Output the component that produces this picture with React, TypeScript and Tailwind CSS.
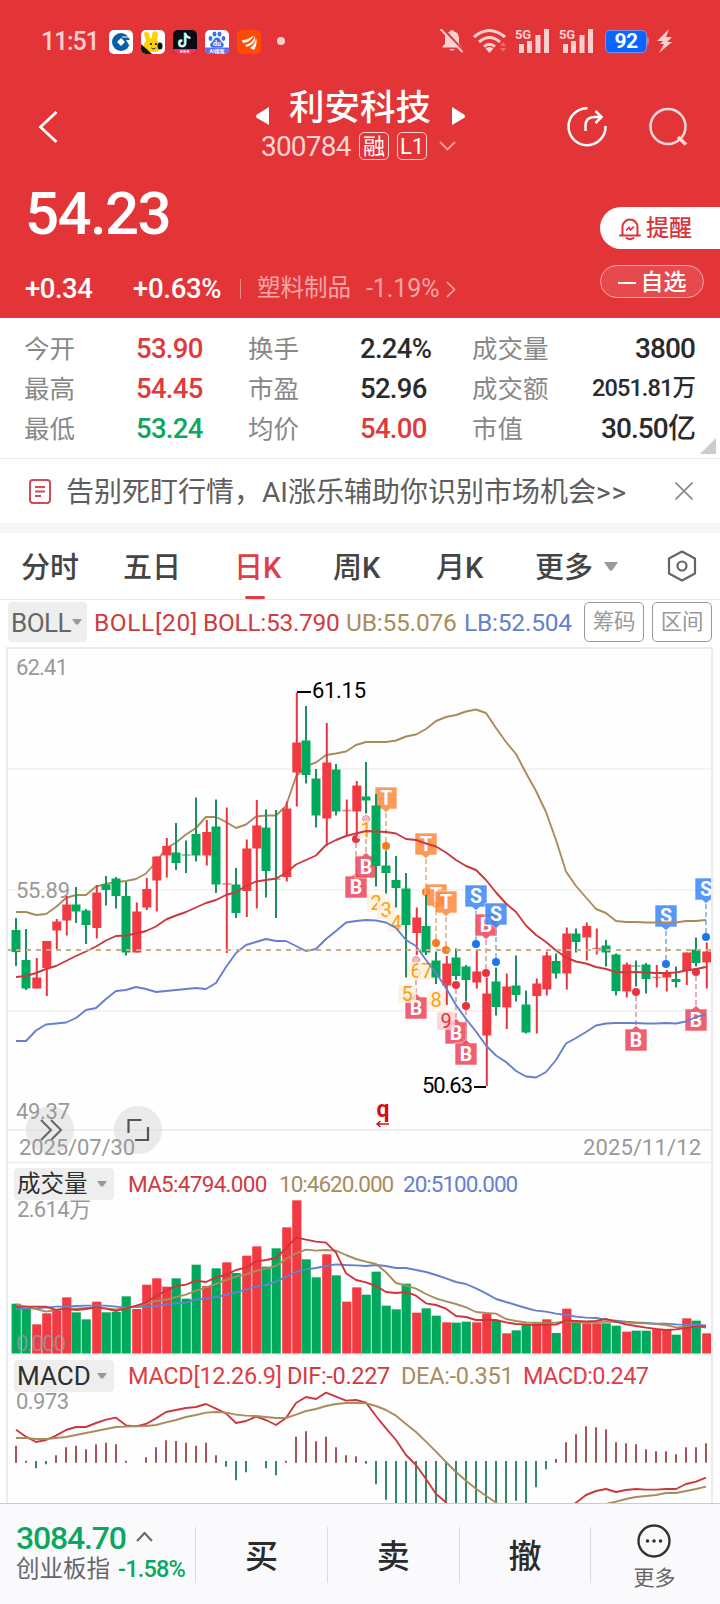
import { ReactNode } from "react";

const RED = "#f23a43";
const GREEN = "#00a95c";
const FONT = { fontFamily: '"Roboto","Noto Sans CJK SC",sans-serif' };

// high, body top, body bottom, low, "r" rising or "g" falling
type Candle = [number, number, number, number, string];

const candles: Candle[] = [
    [918, 930, 952, 966, "g"], [929, 960, 988.5, 990, "g"], [958, 977.5, 988.5, 988.5, "r"], [941, 941, 968, 996, "r"],
    [919, 921.5, 930.5, 949, "r"], [896, 904.5, 920.5, 935.5, "r"], [887, 904.5, 911.5, 923, "g"], [909, 910.5, 925, 944, "g"],
    [885, 892.5, 928, 938.5, "r"], [876, 884.5, 890, 905.5, "g"], [877, 878.5, 896, 908.5, "g"], [882, 896, 952.5, 955.5, "g"],
    [902.5, 911.5, 952.5, 952.5, "r"], [878, 889, 907.5, 910, "r"], [856.5, 856.5, 880.5, 911.5, "r"], [838, 846, 855.5, 877.5, "r"],
    [823, 852.5, 863, 870, "g"], [840.5, 855, 855, 873, "g"], [797.5, 834, 855.5, 861.5, "g"], [820, 832, 855.5, 865.5, "r"],
    [799.5, 826.5, 884.5, 893, "g"], [807.5, 884, 884, 953, "r"], [868, 884.5, 913, 918, "g"], [839.5, 848.5, 891, 917, "r"],
    [800, 825.5, 848.5, 908.5, "r"], [809.5, 827.5, 871, 897.5, "g"], [810, 879, 879, 918, "g"], [801.5, 808.5, 877, 881.5, "r"],
    [692.5, 742.5, 772.5, 806.5, "r"], [706, 740.5, 775, 783.5, "g"], [769, 778.5, 815.5, 827.5, "g"], [723, 762.5, 818.5, 846, "r"],
    [764, 769.5, 811.5, 815.5, "g"], [799.5, 810.5, 810.5, 836, "r"], [781, 785.5, 811.5, 836, "r"], [762, 796.5, 800.5, 813.5, "g"],
    [794, 805.5, 866, 886.5, "g"], [850.5, 865.5, 873, 893.5, "g"], [856, 880, 888, 907.5, "g"], [873, 888.5, 925, 977.5, "g"],
    [907.5, 917.5, 933, 955, "r"], [895, 926, 952.5, 955, "g"], [951.5, 960.5, 977.5, 984, "g"], [956, 963.5, 985.5, 1005, "r"],
    [948.5, 957.5, 976, 980, "g"], [965, 966.5, 980, 1001.5, "g"], [950.5, 971.5, 982.5, 988.5, "r"], [977.5, 993.5, 1035.5, 1086, "r"],
    [967.5, 981.5, 1007, 1015.5, "g"], [973.5, 986.5, 1007.5, 1029, "r"], [955.5, 985.5, 995, 1001.5, "g"], [990.5, 1004.5, 1032.5, 1033.5, "g"],
    [978.5, 983.5, 996, 1033.5, "r"], [951.5, 955.5, 989.5, 995.5, "r"], [953.5, 961, 973.5, 978.5, "g"], [927.5, 933.5, 973.5, 989.5, "r"],
    [928.5, 933.5, 942, 952.5, "g"], [922.5, 926, 937.5, 960.5, "r"], [928.5, 948.5, 948.5, 954.5, "r"], [940, 945.5, 952.5, 966.5, "g"],
    [953.5, 954.5, 991, 995.5, "g"], [962.5, 964.5, 991.5, 997.5, "r"], [960.5, 966, 966, 986.5, "g"], [963, 964.5, 979, 993.5, "g"],
    [965, 977.5, 977.5, 987.5, "r"], [970, 972.5, 977.5, 991.5, "r"], [966.5, 979, 982, 987.5, "g"], [952.5, 952.5, 971, 985, "r"],
    [937.5, 949.5, 963, 966.5, "g"], [942.5, 951.5, 962.5, 988.5, "r"],
];

const upper = [912, 912, 915, 914, 907, 898, 895, 895, 886.5, 884, 882, 881, 879, 873.5, 862, 848.5, 842.5, 834.5, 828, 817, 817, 822, 828, 824.5, 816.5, 815.5, 815.5, 806, 776.5, 766, 762.5, 755, 753.5, 751.5, 745, 742, 742, 742, 740.5, 736.5, 734.5, 729, 721, 717, 715, 711.5, 709.5, 713, 728, 742, 754, 773, 791, 812, 840, 871.5, 886, 897.5, 909, 913, 921, 922, 922, 922.5, 922.5, 922.5, 922.5, 921, 921, 920];
const middle = [977, 976, 973, 969, 966, 961, 956, 951.5, 946.5, 940.5, 936, 935.5, 933.5, 931, 926.5, 919.5, 915.5, 912, 907.5, 903, 900, 895, 892, 886, 881.5, 880, 878.5, 873, 864.5, 860, 855.5, 845, 840, 836, 833.5, 831, 831.5, 832, 833.5, 839, 840, 843.5, 846.5, 852.5, 860, 866, 870, 880, 892.5, 903.5, 912, 925.5, 935, 942, 950.5, 957.5, 961.5, 963.5, 967, 969, 972, 972.5, 972, 972.5, 973, 973, 972.5, 970.5, 969, 967];
const lower = [1041, 1041, 1030.5, 1024.5, 1023.5, 1022.5, 1018, 1010, 1008, 999, 991, 990, 987, 989, 992, 991, 990, 989, 988, 989, 983, 967, 953, 945, 942, 939, 941, 941, 946, 951, 949, 939, 931, 922.5, 921, 920, 920.5, 922.5, 928, 940, 946, 960, 973, 988, 1005, 1019, 1031.5, 1045.5, 1055.5, 1062, 1071, 1076.5, 1077.5, 1072, 1060, 1043.5, 1038, 1032, 1025.5, 1023.5, 1023, 1023, 1023, 1023.5, 1023.5, 1023, 1023.5, 1021.5, 1017, 1014.5];

// volume panel, in thirds of a pixel below the panel origin
const volume = [431, 447, 493, 460, 452, 412, 457, 478, 425, 457, 456, 409, 447, 374, 355, 380, 355, 416, 314, 378, 325, 307, 339, 287, 259, 320, 265, 202, 121, 298, 352, 283, 346, 425, 382, 404, 335, 437, 448, 371, 458, 445, 467, 487, 488, 485, 487, 462, 482, 520, 511, 493, 490, 478, 519, 446, 487, 490, 490, 490, 497, 515, 512, 512, 508, 509, 524, 475, 482, 520];
const ma5 = [442, 440, 440, 440, 450, 446, 450, 447, 442, 446, 453, 445, 437, 428, 408, 392, 378, 374, 362, 366, 352, 345, 330, 323, 304, 300, 294, 265, 232, 239, 245, 248, 278, 340, 360, 367, 378, 396, 399, 396, 407, 430, 435, 446, 468, 471, 480, 480, 480, 487, 492, 493, 495, 494, 494, 482, 483, 484, 483, 477, 485, 493, 498, 503, 507, 510, 508, 504, 500, 500];
const ma10 = [433, 440, 447, 455, 450, 446, 446, 444, 443, 445, 448, 443, 440, 430, 423, 420, 411, 404, 392, 382, 372, 360, 350, 343, 333, 326, 318, 297, 280, 269, 272, 270, 272, 285, 297, 305, 312, 337, 369, 377, 386, 402, 415, 424, 432, 442, 456, 459, 461, 477, 483, 487, 488, 489, 488, 484, 487, 488, 488, 485, 486, 488, 489, 490, 492, 495, 502, 500, 499, 503];
const ma20 = [447, 446, 445, 443, 440, 440, 438, 437, 437, 437, 440, 443, 441, 440, 438, 433, 430, 428, 418, 416, 411, 405, 397, 388, 379, 375, 365, 350, 336, 328, 324, 318, 313, 315, 316, 318, 315, 318, 324, 324, 330, 336, 345, 355, 366, 372, 385, 400, 417, 426, 435, 444, 452, 455, 461, 465, 470, 473, 474, 479, 482, 485, 487, 489, 491, 491, 493, 494, 494, 496];

// MACD histogram: positive rises above the zero line
const hist = [51, 6, -22, -10, 22, 46, 51, 40, 55, 60, 55, 6, 0, 16, 46, 67, 65, 60, 51, 60, 22, -17, -58, -34, 0, -22, -43, 6, 78, 94, 64, 78, 46, 22, 19, -8, -70, -116, -150, -180, -200, -220, -220, -220, -210, -200, -190, -180, -160, -140, -119, -126, -79, -25, 11, 61, 85, 109, 106, 100, 61, 58, 55, 40, 34, 34, 25, 46, 46, 58];
const dif = [239, 260, 276, 270, 257, 240, 231, 231, 219, 209, 203, 226, 229, 222, 205, 186, 180, 174, 171, 162, 176, 190, 219, 213, 200, 210, 225, 204, 159, 141, 147, 128, 140, 152, 150, 158, 198, 235, 270, 315, 345, 387, 432, 457, 500, 540, 560, 580, 590, 590, 580, 570, 550, 530, 510, 485, 458, 435, 423, 417, 426, 420, 417, 419, 419, 417, 417, 402, 395, 383];
const dea = [264, 264, 267, 267, 264, 261, 255, 249, 243, 237, 231, 230, 229, 228, 225, 217, 210, 201, 195, 188, 186, 188, 194, 197, 198, 201, 204, 204, 194, 183, 177, 168, 162, 159, 159, 160, 168, 180, 197, 222, 246, 275, 305, 336, 366, 392, 416, 437, 458, 478, 495, 510, 515, 515, 510, 505, 500, 490, 475, 462, 455, 447, 441, 438, 435, 429, 429, 423, 417, 410];

const xAt = (i: number) => 16 + i * 10;
const line = (ys: number[]) => ys.map((y, i) => `${xAt(i)},${y}`).join(" ");
const scaled = (ys: number[], top: number) => ys.map((y) => top + y / 3);

const Line = ({ ys, color }: { ys: number[]; color: string }) => (
    <polyline points={line(ys)} fill="none" stroke={color} strokeWidth="1.9" strokeLinejoin="round" />
);

type MarkerProps = { x: number; y: number; kind: "B" | "S" | "T"; dot: number; down?: boolean; faded?: boolean };

const markerFill = { B: "#ee4457", S: "#3a85f7", T: "#fb8a3a" };
const dotFill = { B: "#e8323f", S: "#1f74f0", T: "#fb7b1c" };
const dashStroke = { B: "#dc9aa4", S: "#86aedd", T: "#dfae84" };

const Marker = ({ x, y, kind, dot, down, faded }: MarkerProps) => (
    <g>
        <line x1={x} x2={x} y1={down ? y + 15 : y - 15} y2={dot} stroke={dashStroke[kind]} strokeWidth="1.6" strokeDasharray="5 3" />
        {faded
            ? <circle cx={x} cy={dot} r="3.5" fill="#f6b9bf" stroke="#e2606b" strokeDasharray="1.5 1" />
            : <circle cx={x} cy={dot} r="4" fill={dotFill[kind]} />}
        <path
            d={down
                ? `M${x - 11} ${y - 11}h22v22h-7l-4 3.500l-4 -3.500h-7z`
                : `M${x - 11} ${y + 11}h22v-22h-7l-4 -3.500l-4 3.500h-7z`}
            fill={markerFill[kind]}
            fillOpacity="0.85"
            stroke="#fff"
            strokeWidth="0.6"
        />
        <text x={x} y={y + 7} textAnchor="middle" fontSize="19.5" fontWeight="700" fill="#fff">{kind}</text>
    </g>
);

const markers: MarkerProps[] = [
    { x: 356, y: 887, kind: "B", dot: 839 },
    { x: 366, y: 867, kind: "B", dot: 819, faded: true },
    { x: 386, y: 798, kind: "T", dot: 846, down: true },
    { x: 426, y: 844, kind: "T", dot: 892, down: true },
    { x: 436, y: 895, kind: "T", dot: 943, down: true },
    { x: 446, y: 902, kind: "T", dot: 950, down: true },
    { x: 416, y: 1008, kind: "B", dot: 960, faded: true },
    { x: 456, y: 1033, kind: "B", dot: 985 },
    { x: 466, y: 1054, kind: "B", dot: 1006 },
    { x: 476, y: 896, kind: "S", dot: 944, down: true },
    { x: 486, y: 925, kind: "B", dot: 973, down: true },
    { x: 496, y: 914, kind: "S", dot: 962, down: true },
    { x: 636, y: 1040, kind: "B", dot: 992 },
    { x: 666, y: 916, kind: "S", dot: 964, down: true },
    { x: 696, y: 1020, kind: "B", dot: 972 },
    { x: 706, y: 889, kind: "S", dot: 937, down: true },
];

const counts = [
    { n: 1, x: 366, y: 830 }, { n: 2, x: 376, y: 903 }, { n: 3, x: 386, y: 910 }, { n: 4, x: 396, y: 923 },
    { n: 5, x: 407, y: 994 }, { n: 6, x: 416, y: 971 }, { n: 7, x: 427, y: 971 }, { n: 8, x: 436, y: 1000 }, { n: 9, x: 446, y: 1021 },
];

const PriceChart = () => (
    <svg className="block" width="703" height="514" viewBox="8 649 703 514" style={{ overflow: "visible" }}>
        <clipPath id="plot"><rect x="0" y="649" width="713" height="514" /></clipPath>
        {[769, 890, 1011].map((y) => <line key={y} x1="8" x2="711" y1={y} y2={y} stroke="#f3f3f3" strokeWidth="2" />)}
        <line x1="8" x2="711" y1="1130" y2="1130" stroke="#ededed" strokeWidth="2" />
        <line x1="8" x2="711" y1="1162.500" y2="1162.500" stroke="#f0f0f0" strokeWidth="1.5" />
        <g fill="#999" fontSize="22">
            <text x="16" y="675" textLength="52">62.41</text>
            <text x="16" y="898" textLength="54">55.89</text>
        </g>
        <g clipPath="url(#plot)">
            {markers.map((m) => <Marker key={`${m.x}-${m.y}`} {...m} />)}
            {counts.map(({ n, x, y }) => (
                <g key={n}>
                    <rect x={x - 9} y={y - 9} width="18" height="18" rx="2" fill={n === 9 ? "#fbcdd3" : "#fdf0dc"} fillOpacity="0.8" />
                    <text x={x} y={y + 7} textAnchor="middle" fontSize="20" fill={n === 9 ? "#e8323f" : "#f5a11c"}>{n}</text>
                </g>
            ))}
        </g>
        <Line ys={upper} color="#a98c5b" />
        {candles.map(([hi, top, bottom, lo, dir], i) => {
            const x = xAt(i) + (dir === "r" ? 0.8 : 0);
            const wick = dir === "r" ? "#e8353f" : "#1f8f5f";
            return (
                <g key={i}>
                    <line x1={x} x2={x} y1={hi} y2={lo} stroke={wick} strokeWidth="2" />
                    {top === bottom
                        ? <line x1={x - 4.5} x2={x + 4.5} y1={top} y2={top} stroke={wick} strokeOpacity="0.6" strokeWidth="1.6" />
                        : <rect x={x - 4.5} y={top} width="9" height={bottom - top} fill={dir === "r" ? RED : GREEN} />}
                </g>
            );
        })}
        <Line ys={middle} color="#c93a3f" />
        <Line ys={lower} color="#6480cf" />
        <line x1="6" x2="711" y1="950" y2="950" stroke="#c8b083" strokeWidth="1.8" strokeDasharray="5 5" />
        <path d="M297 692h14M474 1087h12" stroke="#000" strokeWidth="2" />
        <g fill="#000" fontSize="22">
            <text x="312" y="698" textLength="54">61.15</text>
            <text x="422" y="1092.500" textLength="51">50.63</text>
        </g>
        <text x="383" y="1117" textAnchor="middle" fontSize="23" fontWeight="700" fill="#d40f0f">q</text>
        <path d="M389 1124h-12m3.500 -3l-3.500 3l3.500 3" fill="none" stroke="#d40f0f" strokeWidth="1.400" />
        <g fill="#dedede" fillOpacity="0.65">
            <circle cx="50" cy="1130" r="24" />
            <circle cx="138" cy="1130" r="24" />
        </g>
        <path d="M41 1120l10 10l-10 10M51 1120l10 10l-10 10" fill="none" stroke="#666" strokeWidth="2" />
        <path d="M128.500 1133v-13h13M148 1127v13h-13" fill="none" stroke="#555" strokeWidth="2.200" />
        <g fill="#999" fontSize="22">
            <text x="16" y="1119" textLength="54">49.37</text>
            <text x="19" y="1155" textLength="116">2025/07/30</text>
            <text x="583" y="1155" textLength="118">2025/11/12</text>
        </g>
    </svg>
);

const VolumeChart = () => (
    <svg className="block" width="703" height="155" viewBox="8 1200 703 155" style={{ overflow: "visible" }}>
        {volume.map((v, i) => {
            const rising = candles[i][4] === "r";
            const y = 1160 + v / 3;
            return <rect key={i} x={xAt(i) - (rising ? 3.8 : 4.4)} y={y} width="9.2" height={1353.5 - y} fill={rising ? RED : GREEN} />;
        })}
        <Line ys={scaled(ma20, 1160)} color="#6480cf" />
        <Line ys={scaled(ma10, 1160)} color="#a98c5b" />
        <Line ys={scaled(ma5, 1160)} color="#d23338" />
        <text x="17" y="1217" fontSize="22" fill="#999" textLength="74">2.614万</text>
        <text x="16" y="1351" fontSize="22" fill="#999" fillOpacity="0.8" textLength="50">0.000</text>
        <line x1="8" x2="711" y1="1354.500" y2="1354.500" stroke="#efefef" />
    </svg>
);

const MacdChart = () => (
    <svg className="block" width="703" height="111" viewBox="8 1392 703 111" style={{ overflow: "visible" }}>
        {hist.map((h, i) => h !== 0 && (
            <line
                key={i}
                x1={xAt(i)}
                x2={xAt(i)}
                y1={h > 0 ? 1462.7 : 1461}
                y2={h > 0 ? 1462.7 - h / 3 : 1461 - h / 3}
                stroke={h > 0 ? "#a9545a" : "#318a66"}
                strokeWidth="2"
            />
        ))}
        <Line ys={scaled(dif, 1350)} color="#c93a3f" />
        <Line ys={scaled(dea, 1350)} color="#a98c5b" />
        <text x="16" y="1409" fontSize="22" fill="#999" textLength="53">0.973</text>
    </svg>
);

const StatusBar = () => (
    <div className="flex h-[82px] items-center pl-[41px]">
        <span className="w-[68px] pt-0.5 text-[25px] font-medium tracking-[-1.2px] text-[#fbd0d0]">11:51</span>
        <div className="flex gap-2 pt-0.5">
            <svg width="24" height="24" viewBox="0 0 24 24">
                <rect width="24" height="24" rx="5" fill="#fff" />
                <circle cx="12" cy="12" r="9" fill="#0a5ea8" />
                <path d="M12 8l4 4l-4 4l-4 -4z" fill="#fff" />
                <path d="M13 7h7l-2 -4" fill="none" stroke="#fff" strokeWidth="1.200" />
                <path d="M17 10h6v5h-3z" fill="#fff" />
            </svg>
            <svg width="24" height="24" viewBox="0 0 24 24">
                <rect width="24" height="24" rx="5" fill="#fff" />
                <path d="M3 4c0 -3 4 -3 5 0l1 4h2l0 -4c1 -4 6 -3 6 0l-1 6c3 4 5 12 -2 12h-8c-5 -3 -4 -8 -1 -11z" fill="#fdd20c" />
                <path d="M0 14l11 10h-6a5 5 0 0 1 -5 -5z" fill="#111" />
                <ellipse cx="19" cy="16" rx="2.500" ry="3.500" fill="#111" />
                <circle cx="10" cy="14" r="1" /><circle cx="15" cy="14" r="1" />
                <path d="M10.500 18q2 2 4 0" fill="none" stroke="#111" strokeWidth="0.900" />
            </svg>
            <svg width="24" height="24" viewBox="0 0 24 24">
                <rect width="24" height="24" rx="5" fill="#0b0b14" />
                <path d="M12.500 3v10.500a3 3 0 1 1 -3 -3M12.500 4q1 3.500 5 4" fill="none" stroke="#29e5e5" strokeWidth="2.200" transform="translate(-.7 -.5)" />
                <path d="M12.500 3v10.500a3 3 0 1 1 -3 -3M12.500 4q1 3.500 5 4" fill="none" stroke="#fff" strokeWidth="1.900" />
                <path d="M0 19h24a5 5 0 0 1 -5 5h-14a5 5 0 0 1 -5 -5z" fill="#f0356d" />
                <path d="M7 21.500h10" stroke="#fff" strokeWidth="1.800" strokeDasharray="2.500 .8" />
            </svg>
            <svg width="24" height="24" viewBox="0 0 24 24">
                <rect width="24" height="24" rx="5" fill="#fff" />
                <g fill="#3a70e8">
                    <ellipse cx="9.500" cy="4" rx="2" ry="2.600" /><ellipse cx="14.500" cy="4" rx="2" ry="2.600" />
                    <ellipse cx="5.500" cy="8.500" rx="1.900" ry="2.400" /><ellipse cx="18.500" cy="8.500" rx="1.900" ry="2.400" />
                    <path d="M12 7.500c3 0 3 3 5.500 5s1 5 -1.500 5h-8c-2.500 0 -4 -3 -1.500 -5s2.500 -5 5.500 -5z" />
                </g>
                <text x="12" y="16" fontSize="7" fontWeight="700" fill="#fff" textAnchor="middle">du</text>
                <path d="M0 17.500h24v1.500a5 5 0 0 1 -5 5h-14a5 5 0 0 1 -5 -5z" fill="#5b6ff0" />
                <text x="12" y="23" fontSize="5" fontWeight="700" fill="#fff" textAnchor="middle">AI搜索</text>
            </svg>
            <svg width="24" height="24" viewBox="0 0 24 24">
                <rect width="24" height="24" rx="5" fill="#ff4a00" />
                <path d="M5 10q7 0 12 -5q-3 7 -11 8zM8 15q8 -2 10 -9q1 8 -8 11zM13 18q5 -3 6 -10q2 6 -2 12z" fill="#fff" />
            </svg>
        </div>
        <span className="ml-4 size-2 rounded-full bg-[#fbd0d0]" />
        <svg className="ml-[155px]" width="24" height="24" viewBox="0 0 24 24">
            <path d="M12 1a2 2 0 0 1 2 1.500c4 1 5 4 5 7v5l3 4h-20l3 -4v-5c0 -3 1 -6 5 -7a2 2 0 0 1 2 -1.500zM9 20h6q-3 3.500 -6 0z" fill="#fbd0d0" />
            <path d="M2 -1L24 23" stroke="#e33538" strokeWidth="3" />
            <path d="M0.500 0L22.500 23" stroke="#fbd0d0" strokeWidth="2" />
        </svg>
        <svg className="ml-2" width="36" height="26" viewBox="0 0 36 26">
            <path d="M2 9q15 -13 31 0M7 14q10.500 -9 21 0M12 18.500q5.500 -4.500 11 0" fill="none" stroke="#fbd0d0" strokeWidth="3" />
            <path d="M13.500 20.500q4 -3 8 0l-4 4.500z" fill="#fbd0d0" />
            <path d="M28 18l3 -4l3 4zM28 20l3 4l3 -4z" fill="#ee6b6b" />
        </svg>
        {[0, 1].map((n) => (
            <svg key={n} className="ml-[7px]" width="37" height="26" viewBox="0 0 37 26">
                <text x="0" y="10.500" fontSize="13" fontWeight="700" fill="#fbd0d0" textLength="16">5G</text>
                <path d="M4 16h5v9h-5zM12 13h5v12h-5zM20.500 7h5v18h-5zM29 1h5v24h-5z" fill="#fbd0d0" />
            </svg>
        ))}
        <span className="ml-[9px] flex h-[23px] w-[42px] items-center justify-center rounded-[5px] border border-[#7c8fe8] bg-[#0766ff] pt-0.5 text-[21px] font-bold tracking-[-0.5px] text-white">92</span>
        <span className="h-2 w-0.5 rounded-r bg-[#ee6b6b]" />
        <svg className="ml-[7px]" width="17" height="24" viewBox="0 0 17 24">
            <path d="M13 0L1 12h6l-3 3h4l-5 9L16 13h-5l5 -5h-6z" fill="#fbd0d0" />
        </svg>
    </div>
);

const Header = () => (
    <header className="h-[318px] w-full bg-[#e33538] text-white">
        <StatusBar />
        <div className="flex h-[88px] items-start pl-[38px]">
            <svg className="mt-[28px]" width="20" height="34" viewBox="0 0 20 34">
                <path d="M18.500 2L2.500 17l16 15" fill="none" stroke="#fff" strokeWidth="2.800" />
            </svg>
            <div className="ml-[184px] flex w-[240px] flex-col items-center">
                <div className="flex h-12 w-full items-center pt-1 pl-[14px]">
                    <svg className="mt-4" width="13" height="18" viewBox="0 0 13 18"><path d="M13 0v18l-12 -7q-2 -2 0 -3.500z" fill="#fff" /></svg>
                    <h1 className="ml-[20px] text-[35.500px] leading-[48px] font-medium whitespace-nowrap">利安科技</h1>
                    <svg className="mt-4 ml-[21px]" width="13" height="18" viewBox="0 0 13 18"><path d="M0 0v18l12 -7q2 -2 0 -3.500z" fill="#fff" /></svg>
                </div>
                <div className="flex h-8 w-full items-center pl-[19px]">
                    <span className="w-[98px] pt-0.5 text-[28px] tracking-[-0.8px] text-[#fbd3d3]">300784</span>
                    <span className="flex h-7 w-[30px] items-center justify-center rounded-[5px] border border-[#fbd3d3] text-[22px]">融</span>
                    <span className="ml-2 flex h-7 w-[30px] items-center justify-center rounded-[5px] border border-[#fbd3d3] text-[22px]">L1</span>
                    <svg className="ml-3" width="17" height="10" viewBox="0 0 17 10"><path d="M1 1l7.500 7.500L16 1" fill="none" stroke="#f3a3a3" strokeWidth="1.800" /></svg>
                </div>
            </div>
            <svg className="mt-[24px] ml-[84px]" width="42" height="42" viewBox="0 0 42 42">
                <path d="M21.500 2.200A18.500 18.500 0 1 0 39.500 20" fill="none" stroke="#fff" strokeWidth="2.500" />
                <path d="M19.500 25v-5q0 -9 9 -9h7M29.500 5l6 6l-6 6" fill="none" stroke="#fff" strokeWidth="2.500" />
            </svg>
            <svg className="mt-[25px] ml-[40px]" width="42" height="42" viewBox="0 0 42 42">
                <circle cx="20" cy="19.500" r="17.500" fill="none" stroke="#f9dada" strokeWidth="2.500" />
                <path d="M30 30l8 7.500" stroke="#f9dada" strokeWidth="3.500" />
            </svg>
        </div>
        <div className="flex h-[148px] justify-between">
            <div className="pl-[25px]">
                <div className="mt-[13px] text-[60px] leading-[62px] font-medium tracking-[-1.6px]">54.23</div>
                <div className="mt-[29px] flex h-[30px] items-center">
                    <span className="w-[108px] text-[27.5px] font-medium tracking-[-0.5px]">+0.34</span>
                    <span className="w-[107px] text-[27.5px] font-medium tracking-[-0.3px]">+0.63%</span>
                    <span className="h-5 w-px bg-[#f08a8a]" />
                    <span className="ml-4 w-[109px] text-[23.5px] whitespace-nowrap text-[#f6a5a6]">塑料制品</span>
                    <span className="w-[80px] text-[25px] tracking-[-0.1px] text-[#f6a5a6]">-1.19%</span>
                    <svg width="10" height="17" viewBox="0 0 10 17"><path d="M1 1l7.500 7.500L1 16" fill="none" stroke="#f6a5a6" strokeWidth="1.600" /></svg>
                </div>
            </div>
            <div className="flex w-[120px] flex-col pt-[37px]">
                <div className="flex h-[42px] items-center rounded-l-full bg-white pl-[19px] text-[23px] text-[#d8343a]">
                    <svg className="mt-0.5 mr-[5px]" width="22" height="24" viewBox="0 0 22 24">
                        <path d="M3.500 18v-8a7.500 7.500 0 0 1 15 0v8M1 18.500h20M7.500 21q3.500 2.500 7 0" fill="none" stroke="#d8343a" strokeWidth="2" strokeLinecap="round" />
                        <path d="M7 13.500l3 -3l1.500 2.500l3.500 -3.500" fill="none" stroke="#d8343a" strokeWidth="1.700" />
                    </svg>
                    <span className="pt-0.5 font-medium">提醒</span>
                </div>
                <div className="mt-4 flex h-[33px] w-[104px] items-center justify-center gap-[5px] rounded-full border border-[#f4a9aa] bg-[#e74a4d] text-[23px] font-medium">
                    <span className="mt-0.5 h-0.5 w-[18px] bg-white" />
                    <span className="pt-[3px]">自选</span>
                </div>
            </div>
        </div>
    </header>
);

const stats = [
    ["今开", "53.90", "text-[#e0393c]", "换手", "2.24%", "text-[#2b2b2b]", "成交量", "3800", "text-[28px]"],
    ["最高", "54.45", "text-[#e0393c]", "市盈", "52.96", "text-[#2b2b2b]", "成交额", "2051.81万", "text-[23.5px]"],
    ["最低", "53.24", "text-[#0ba75f]", "均价", "54.00", "text-[#e0393c]", "市值", "30.50亿", "text-[28px]"],
];

const Stats = () => (
    <section className="relative h-[141px] border-b border-[#ececec] pt-[11px] pr-[25px] pl-6">
        {stats.map((s) => (
            <div key={s[0]} className="flex h-10 items-center text-[25.5px] whitespace-nowrap text-[#888]">
                <span className="w-[112px]">{s[0]}</span>
                <span className={`w-[112px] text-[27.5px] font-medium tracking-[-0.7px] ${s[2]}`}>{s[1]}</span>
                <span className="w-[112px]">{s[3]}</span>
                <span className={`w-[112px] text-[27.5px] font-medium tracking-[-0.7px] ${s[5]}`}>{s[4]}</span>
                <span>{s[6]}</span>
                <span className={`ml-auto font-medium tracking-[-0.9px] text-[#2b2b2b] ${s[8]}`}>{s[7]}</span>
            </div>
        ))}
        <svg className="absolute right-1 bottom-1" width="16" height="16" viewBox="0 0 16 16"><path d="M16 0v16H0z" fill="#ccc" /></svg>
    </section>
);

const Banner = () => (
    <section className="flex h-16 items-center pl-[29px]">
        <svg width="22" height="25" viewBox="0 0 22 25">
            <rect x="1" y="1" width="20" height="23" rx="3" fill="none" stroke="#d14a55" strokeWidth="2" />
            <path d="M6 8h10M6 12.500h10M6 17h6" stroke="#d14a55" strokeWidth="2" />
        </svg>
        <span className="ml-[15px] w-[609px] pt-[3px] text-[28px] leading-[40px] whitespace-nowrap text-[#5e5e5e]">告别死盯行情，AI涨乐辅助你识别市场机会<span className="tracking-[1px]">&gt;&gt;</span></span>
        <svg width="18" height="18" viewBox="0 0 18 18"><path d="M0.500 0.500l17 17M17.500 0.500l-17 17" stroke="#8a8a8a" strokeWidth="1.700" /></svg>
    </section>
);

const Caret = ({ className = "" }: { className?: string }) => (
    <svg className={className} width="10" height="6" viewBox="0 0 10 6"><path d="M0 0h10l-4 5.500h-2z" fill="#999" /></svg>
);

const tabs = [
    { label: "分时", width: "w-[102px]" },
    { label: "五日", width: "w-[111px]" },
    { label: "日K", width: "w-[99px]", active: true },
    { label: "周K", width: "w-[103px]" },
    { label: "月K", width: "w-[99px]" },
    { label: "更多", width: "w-[69px]" },
];

const Tabs = () => (
    <nav className="flex h-[67px] items-center border-b border-[#e8e8e8] pl-[21px]">
        {tabs.map((t) => (
            <button key={t.label} className={`relative h-full pt-[5px] text-left text-[29px] font-medium whitespace-nowrap ${t.width} ${t.active ? "text-[#df3d4a]" : "text-[#444]"}`}>
                {t.label}
                {t.active && <span className="absolute bottom-0 left-[11px] h-[3px] w-5 rounded-full bg-[#df3d4a]" />}
            </button>
        ))}
        <svg width="14" height="9" viewBox="0 0 14 9"><path d="M0 0h14l-5.500 8q-1.500 1.500 -3 0z" fill="#999" /></svg>
        <svg className="ml-[49px]" width="30" height="32" viewBox="0 0 30 32">
            <path d="M15 1.500L28 8.500v15L15 30.500L2 23.500v-15z" fill="none" stroke="#666" strokeWidth="2.200" strokeLinejoin="round" />
            <circle cx="15" cy="16" r="4.500" fill="none" stroke="#666" strokeWidth="2.200" />
        </svg>
    </nav>
);

const BollRow = () => (
    <div className="flex h-[47px] items-center pb-1 pl-2 text-[24.5px] tracking-[-0.2px] whitespace-nowrap">
        <div className="flex h-10 w-[79px] items-center rounded-[4px] bg-[#eee] pl-[3px] text-[#666]">
            <span className="w-[61px] pt-[3px] text-[26px] tracking-[-0.5px]">BOLL</span>
            <Caret />
        </div>
        <span className="ml-[7px] w-[109px] pt-[3px] tracking-[0.6px] text-[#cf3b40]">BOLL[20]</span>
        <span className="w-[143px] pt-[3px] tracking-[-0.3px] text-[#cf3b40]">BOLL:53.790</span>
        <span className="w-[118px] pt-[3px] text-[#a98c5b]">UB:55.076</span>
        <span className="w-[120px] pt-[3px] text-[#6480cf]">LB:52.504</span>
        <span className="flex h-10 w-[60px] items-center justify-center rounded-[5px] border border-[#999] pt-0.5 text-[21.5px] text-[#999]">筹码</span>
        <span className="ml-2 flex h-10 w-[60px] items-center justify-center rounded-[5px] border border-[#999] pt-0.5 text-[21.5px] text-[#999]">区间</span>
    </div>
);

const PanelHeader = ({ name, children }: { name: string; children: ReactNode }) => (
    <div className="flex h-[37px] items-center pt-1 pl-[6px] text-[23.5px] whitespace-nowrap">
        <div className="flex h-8 w-[100px] items-center justify-between rounded-[4px] bg-[#eee] pr-[7px] pl-[3px] text-[#2f2f2f]">
            <span className={name === "MACD" ? "pt-0.5 text-[26px]" : "pt-0.5"}>{name}</span>
            <Caret />
        </div>
        {children}
    </div>
);

const BottomBar = () => (
    <footer className="flex h-[101px] items-center border-t border-[#ccc] bg-[#fafafc] pb-[1px]">
        <div className="h-full w-[195px] pt-[14px] pl-[16px] whitespace-nowrap">
            <div className="flex h-[40px] items-center text-[32px] font-medium tracking-[-1.2px] text-[#0ba75f]">
                3084.70
                <svg className="mb-1 ml-[10px]" width="17" height="11" viewBox="0 0 17 11"><path d="M1 10l7.500 -8L16 10" fill="none" stroke="#666" strokeWidth="2" /></svg>
            </div>
            <div className="-mt-0.5 flex h-7 items-center text-[23.5px] text-[#66666e]">
                创业板指
                <span className="ml-2 text-[23.5px] font-medium tracking-[-0.8px] text-[#0ba75f]">-1.58%</span>
            </div>
        </div>
        {["买", "卖", "撤"].map((t) => (
            <button key={t} className="mt-0.5 h-14 w-[131.800px] border-l border-[#dcdce0] pt-[3px] text-[33px] leading-[53px] font-medium text-[#2b2b2b]">{t}</button>
        ))}
        <div className="mt-0.5 h-14 flex-1 border-l border-[#dcdce0] text-[#666]">
            <button className="-mt-[3px] flex w-[126px] flex-col items-center text-[21px] leading-[30px]">
                <svg className="mb-[5px] shrink-0" width="34" height="34" viewBox="0 0 34 34">
                    <circle cx="17" cy="17" r="15.500" fill="none" stroke="#333" strokeWidth="2.400" />
                    <circle cx="10.500" cy="17" r="1.800" fill="#333" /><circle cx="17" cy="17" r="1.800" fill="#333" /><circle cx="23.500" cy="17" r="1.800" fill="#333" />
                </svg>
                更多
            </button>
        </div>
    </footer>
);

const App = () => (
    <div className="h-[1604px] w-[720px] overflow-hidden bg-white" style={FONT}>
        <Header />
        <Stats />
        <Banner />
        <div className="h-[10px] bg-[#f6f6f6]" />
        <Tabs />
        <BollRow />
        <main className="ml-[6px] h-[856px] w-[707px] overflow-hidden border-x-2 border-t-2 border-[#ececec] bg-[#fefefe]">
            <PriceChart />
            <PanelHeader name="成交量">
                <span className="ml-[14px] w-[151px] pt-0.5 text-[22.5px] tracking-[-0.7px] text-[#cf3b40]">MA5:4794.000</span>
                <span className="w-[124px] pt-0.5 text-[22.5px] tracking-[-1px] text-[#a98c5b]">10:4620.000</span>
                <span className="pt-0.5 text-[22.5px] tracking-[-1px] text-[#6480cf]">20:5100.000</span>
            </PanelHeader>
            <VolumeChart />
            <PanelHeader name="MACD">
                <span className="ml-[14px] w-[159px] pt-0.5 tracking-[-0.3px] text-[#df3d42]">MACD[12.26.9]</span>
                <span className="w-[114px] pt-0.5 tracking-[-0.3px] text-[#cf3b40]">DIF:-0.227</span>
                <span className="w-[122px] pt-0.5 tracking-[-0.3px] text-[#a98c5b]">DEA:-0.351</span>
                <span className="pt-0.5 tracking-[-0.6px] text-[#df3d4a]">MACD:0.247</span>
            </PanelHeader>
            <MacdChart />
        </main>
        <BottomBar />
    </div>
);

export default App;
